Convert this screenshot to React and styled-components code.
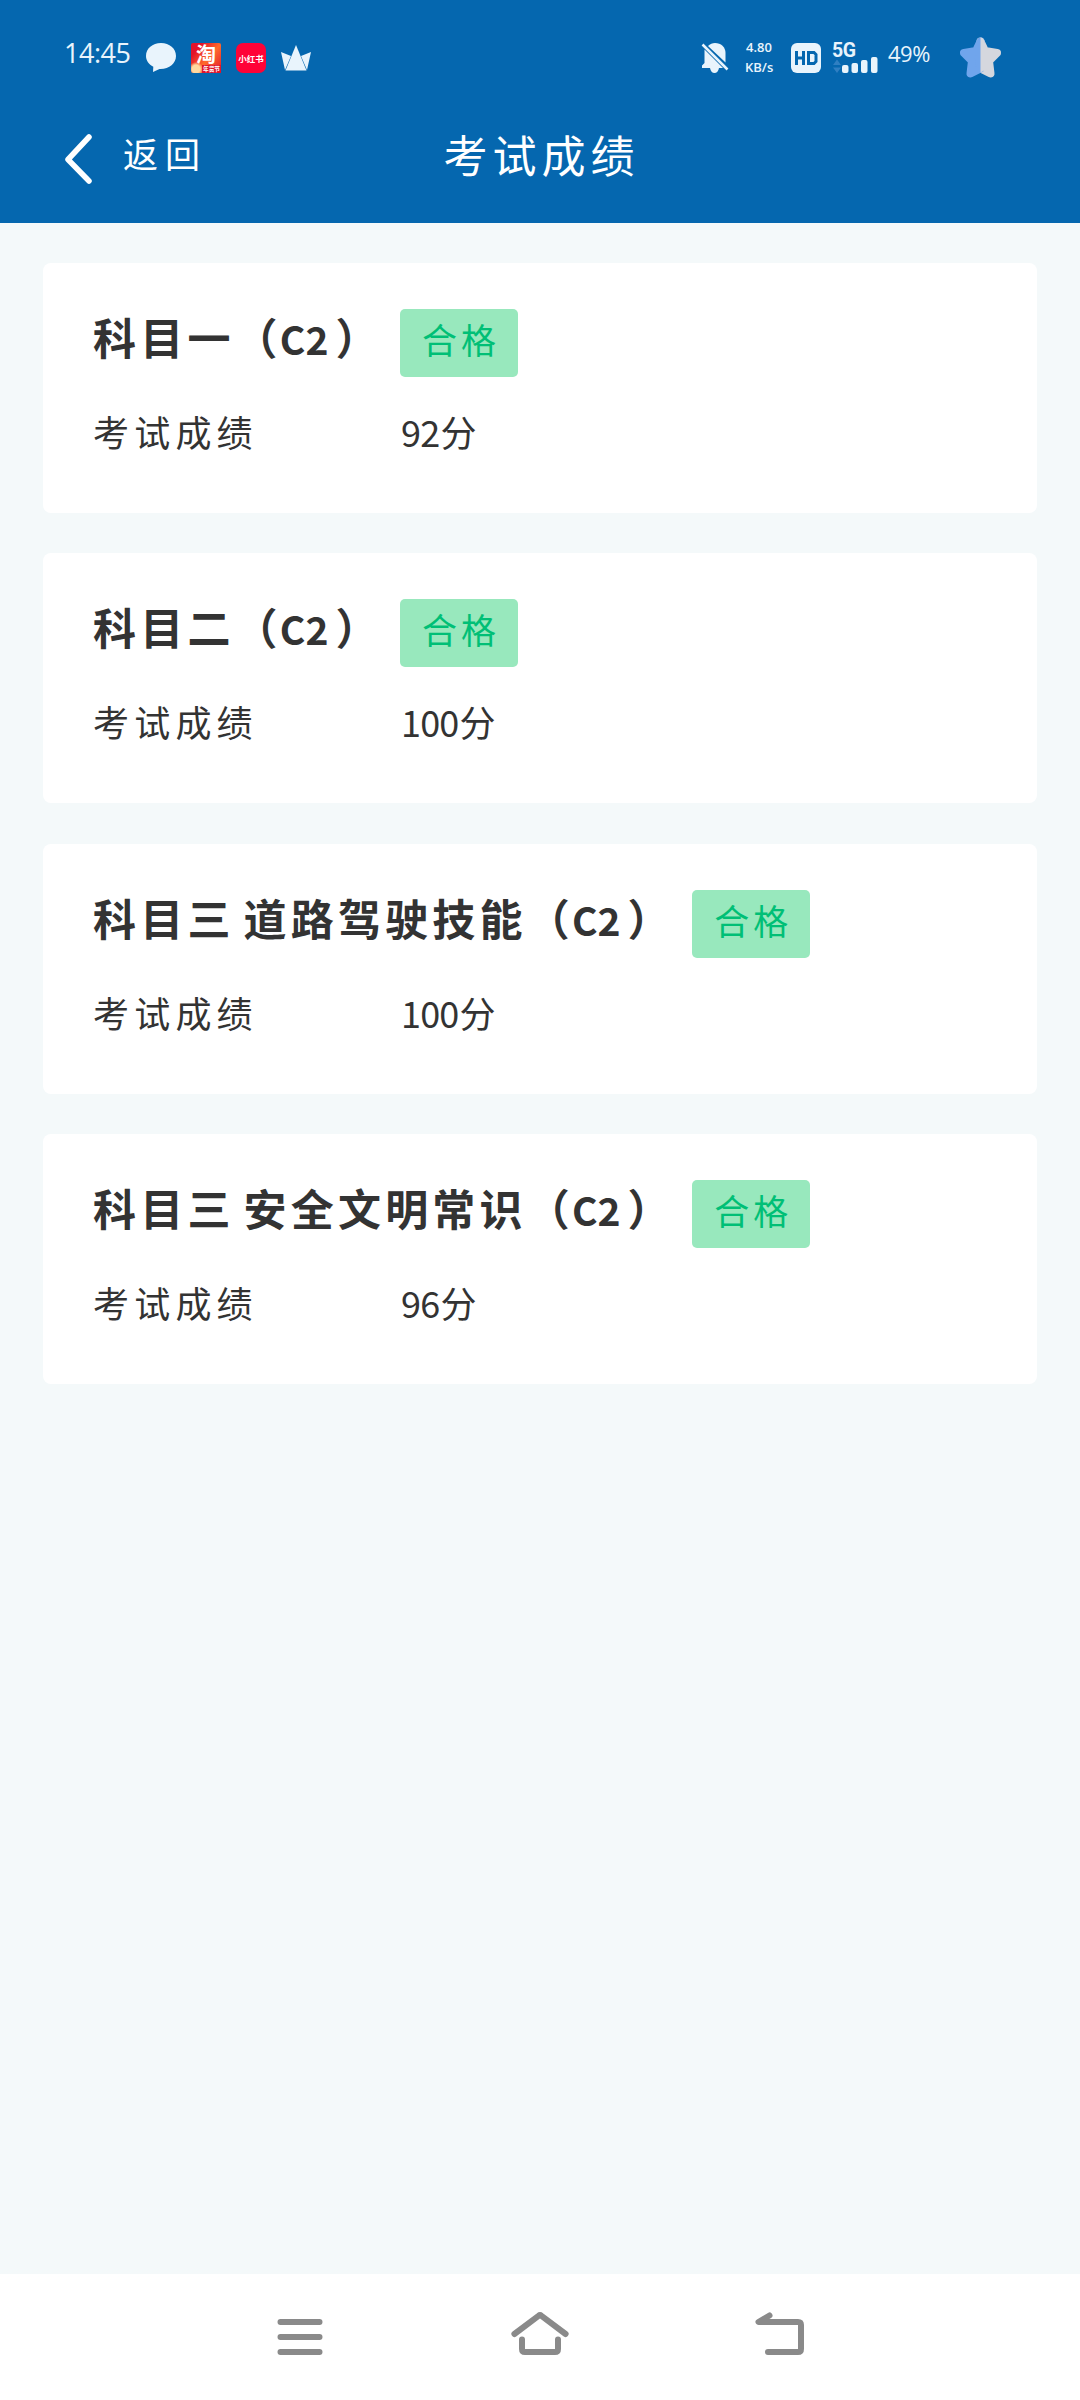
import React from 'react';
import styled, { createGlobalStyle, css } from 'styled-components';

const GlobalStyle = createGlobalStyle`
    * { box-sizing: border-box; }

    body {
        margin: 0;
        background: #f4f9fa;
        font-family: 'Noto Sans CJK SC', sans-serif;
    }
`;

const Screen = styled.div`
    display: flex;
    flex-direction: column;
    width: 1080px;
    height: 2400px;
    overflow: hidden;
    background: #f4f9fa;
`;

const Header = styled.header`
    height: 223px;
    flex: none;
    color: #fff;
    background: #0567af;
`;

const StatusBar = styled.div`
    display: flex;
    justify-content: space-between;
    height: 92px;
    padding: 37px 79px 0 64px;
    color: #e9f4fc;
`;

const StatusGroup = styled.div`
    display: flex;
    align-items: center;
    height: 41px;
`;

const StatusText = styled.span(({ width, size, gap }) => css`
    width: ${width}px;
    margin: -10px ${gap}px 0 0;
    font-family: 'Open Sans', sans-serif;
    font-size: ${size}px;
    line-height: 36px;
    letter-spacing: -0.5px;
    white-space: nowrap;
`);

const Speed = styled.div`
    display: flex;
    flex-direction: column;
    gap: 6px;
    width: 28px;
    margin: -2px 18px 0 -1px;
    font: 600 13px/14px 'Open Sans', sans-serif;
    text-align: center;
    white-space: nowrap;
`;

const StatusIcon = styled.svg(({ gap = 15 }) => css`
    display: block;
    flex: none;
    margin-right: ${gap}px;
    overflow: visible;
`);

const AppIcon = styled.div(({ color, round }) => css`
    display: flex;
    flex-direction: column;
    align-items: center;
    justify-content: center;
    width: 30px;
    height: 30px;
    margin-right: 15px;
    border-radius: ${round}px;
    background: ${color};
    color: #fff;
    font-weight: bold;
    white-space: nowrap;
`);

const AppGlyph = styled.span(({ size, line }) => css`
    font-size: ${size}px;
    line-height: ${line}px;
`);

const Festival = styled.span`
    align-self: flex-end;
    width: 19px;
    padding-left: 1px;
    background: #e0142c;
    font-size: 5.7px;
    line-height: 8px;
`;

const NavBar = styled.div`
    display: grid;
    grid-template-columns: 1fr auto 1fr;
    align-items: center;
    height: 130px;
    padding: 0 63px;
`;

const BackLink = styled.a`
    display: flex;
    align-items: center;
    color: #fff;
`;

const BackText = styled.span`
    margin: -9px 0 0 28px;
    font-size: 35px;
    line-height: 50px;
    letter-spacing: 7px;
`;

const PageTitle = styled.h1`
    margin: -6px 0 0 3px;
    font-size: 44px;
    font-weight: normal;
    line-height: 60px;
    letter-spacing: 5px;
`;

const Results = styled.main`
    display: flex;
    flex: 1;
    flex-direction: column;
    gap: 40.3px;
    padding: 40px 43px;
`;

const Card = styled.section`
    height: 250px;
    padding: 46px 50px 0;
    border-radius: 8px;
    background: #fff;
    color: #333;
`;

const CardHead = styled.div`
    display: flex;
    align-items: flex-start;
    height: 68px;
`;

const Subject = styled.h2`
    margin: 0 17px 0 0;
    font-size: 43px;
    font-weight: bold;
    line-height: 54px;
    letter-spacing: 4.2px;
    word-spacing: -5px;
    white-space: nowrap;
`;

const Licence = styled.span`
    margin: 0 7px 0 -2px;
    font-size: 39px;
    letter-spacing: 0;
`;

const Badge = styled.span`
    width: 118px;
    height: 68px;
    padding-left: 5px;
    border-radius: 5px;
    background: #98e8bd;
    color: #00bf76;
    font-size: 35px;
    line-height: 60px;
    letter-spacing: 4px;
    text-align: center;
`;

const ScoreRow = styled.div`
    display: flex;
    margin-top: 27px;
    font-size: 36px;
    line-height: 54px;
`;

const ScoreLabel = styled.span`
    width: 308px;
    letter-spacing: 5.2px;
`;

const Score = styled.span`
    display: flex;
    gap: 1px;
    letter-spacing: -0.8px;
`;

const SystemNav = styled.nav`
    display: flex;
    flex: none;
    justify-content: space-between;
    height: 126px;
    padding: 34px 270px 0;
    background: #fff;
`;

const results = [
    { subject: '科目一', score: 92 },
    { subject: '科目二', score: 100 },
    { subject: '科目三 道路驾驶技能', score: 100 },
    { subject: '科目三 安全文明常识', score: 96 },
];

const ResultCard = ({ subject, score }) => (
    <Card>
        <CardHead>
            <Subject>{ subject }（<Licence>C2</Licence>）</Subject>
            <Badge>合格</Badge>
        </CardHead>
        <ScoreRow>
            <ScoreLabel>考试成绩</ScoreLabel>
            <Score><span>{ score }</span><span>分</span></Score>
        </ScoreRow>
    </Card>
);

const NavIcon = ({ children }) => (
    <svg width="60" height="60" viewBox="0 0 60 60" fill="none" stroke="#8a8a8a" strokeWidth="6" strokeLinecap="round" strokeLinejoin="round">
        { children }
    </svg>
);

const StatusLeft = () => (
    <StatusGroup>
        <StatusText width={ 68 } size={ 27 } gap={ 14 }>14:45</StatusText>
        <StatusIcon width="30" height="30" viewBox="0 0 30 30" fill="#e9f4fc">
            <path d="M15 0C6.500 0 0 5.500 0 13c0 4.500 2.800 8.300 7.300 10.700L7 29l6.500-3.100C23 26.300 30 20.500 30 13S23.500 0 15 0Z" />
        </StatusIcon>
        <AppIcon color="radial-gradient(circle at 5px 26px, #ffd9a0 4px, transparent 7px), linear-gradient(130deg, #e3122b 20%, #ff6a2b 55%, #e0142c)" round={ 2 }>
            <AppGlyph size={ 20 } line={ 22 }>淘</AppGlyph>
            <Festival>年货节</Festival>
        </AppIcon>
        <AppIcon color="#ff0337" round={ 7 }>
            <AppGlyph size={ 8.5 } line={ 30 }>小红书</AppGlyph>
        </AppIcon>
        <StatusIcon gap={ 0 } width="30" height="30" viewBox="0 0 30 30" fill="#e9f4fc">
            <path d="M15 2 25.500 27.500h-21Z" />
            <path d="M0 9 10 13 4 27ZM30 9l-10 4 6 14Z" />
        </StatusIcon>
    </StatusGroup>
);

const StatusRight = () => (
    <StatusGroup>
        <StatusIcon gap={ 17 } width="28" height="30" viewBox="0 0 28 30" fill="#e9f4fc">
            <path d="M7 3C9 1 11.500 0 14 0c6 0 10.500 4 10.500 10v9.500Z" />
            <path d="M3.500 6.500 22 25h-4c-.5 3-2.300 5-4.500 5s-4-2-4.500-5H1v-2.500L3.500 20Z" />
            <path d="M1.500 1.500 26.500 26.500" stroke="#e9f4fc" strokeWidth="2.500" />
        </StatusIcon>
        <Speed>
            <span>4.80</span>
            <span>KB/s</span>
        </Speed>
        <StatusIcon gap={ 12 } width="30" height="30" viewBox="0 0 30 30">
            <rect width="30" height="30" rx="6" fill="#e9f4fc" />
            <path d="M5.500 8v14M12.500 8v14M5.500 15h7M17.500 9.500h5.500l2 2v7l-2 2h-5.500Z" fill="none" stroke="#0567af" strokeWidth="3" />
        </StatusIcon>
        <StatusIcon gap={ 10 } width="45" height="32" viewBox="0 0 45 32" fill="#e9f4fc">
            <text x="-1" y="15" fontFamily="Roboto, sans-serif" fontSize="19.5" fontWeight="bold" letterSpacing="-.5">5G</text>
            <path d="M0 23 4 17.500l4 5.500ZM0 25.500h8L4 31Z" fill="#2f7fc2" />
            <rect x="9" y="23" width="6.500" height="8" rx="2" />
            <rect x="18.500" y="21" width="6.500" height="10" rx="2" />
            <rect x="28" y="18" width="6.500" height="13" rx="2" />
            <rect x="38" y="15" width="6.500" height="16" rx="2" />
        </StatusIcon>
        <StatusText width={ 44 } size={ 22 } gap={ 28 }>49%</StatusText>
        <StatusIcon gap={ 0 } width="41" height="41" viewBox="0 0 41 41" strokeWidth="8" strokeLinejoin="round">
            <path d="M20.500 4.500 25 14l12 2-8 8 1.500 12.500-10-5Z" fill="#d5d7de" stroke="#d5d7de" />
            <path d="M20.500 4.500 16 14 4 16l8 8-1.500 12.500 10-5Z" fill="#70a5ec" stroke="#70a5ec" />
            <path d="M20.500.5c2 0 3 1 4 3.500L27 16v16l-6.500 3.500Z" fill="#d5d7de" />
        </StatusIcon>
    </StatusGroup>
);

const App = () => (
    <React.Fragment>
        <GlobalStyle />
        <Screen>
            <Header>
                <StatusBar>
                    <StatusLeft />
                    <StatusRight />
                </StatusBar>
                <NavBar>
                    <BackLink>
                        <svg width="32" height="54" viewBox="0 0 32 54" fill="none" stroke="#fff" strokeWidth="5.5" strokeLinecap="round" strokeLinejoin="round">
                            <path d="M26 7 5 29.500 26 51" />
                        </svg>
                        <BackText>返回</BackText>
                    </BackLink>
                    <PageTitle>考试成绩</PageTitle>
                </NavBar>
            </Header>
            <Results>
                { results.map(result => <ResultCard key={ result.subject } { ...result } />) }
            </Results>
            <SystemNav>
                <NavIcon>
                    <path d="M10.500 14h39M10.500 29h39M10.500 44h39" />
                </NavIcon>
                <NavIcon>
                    <path d="M4.400 26 28.500 7.800q1.500-1.200 3 0L55.600 26" />
                    <path d="M12 31.500V41q0 3 3 3h30q3 0 3-3v-9.500" />
                </NavIcon>
                <NavIcon>
                    <path d="M19.500 7.500 8.500 14H48q3 0 3 3v24q0 3-3 3H18" />
                </NavIcon>
            </SystemNav>
        </Screen>
    </React.Fragment>
);

export default App;
